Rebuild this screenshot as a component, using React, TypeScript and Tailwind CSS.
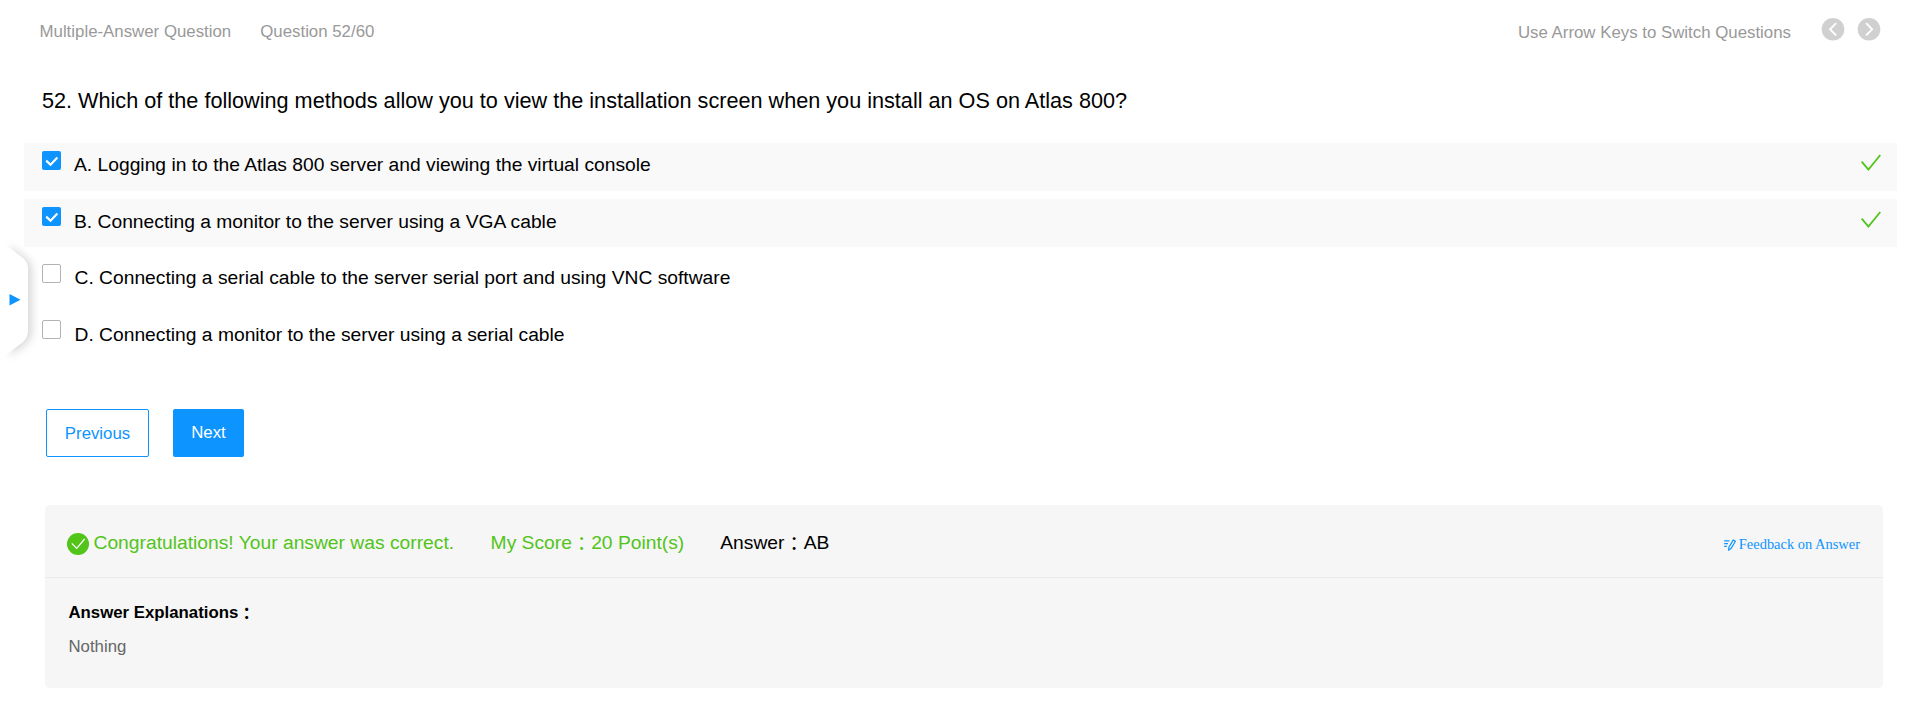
import React from "react";

type Option = {
  label: string;
  checked: boolean;
  box: string;
  text: string;
};

const options: Option[] = [
  {
    label: "A. Logging in to the Atlas 800 server and viewing the virtual console",
    checked: true,
    box: "h-[48px] bg-[#f9f9f9]",
    text: "ml-[13px] mt-[8px]",
  },
  {
    label: "B. Connecting a monitor to the server using a VGA cable",
    checked: true,
    box: "mt-2 h-[48px] bg-[#f9f9f9]",
    text: "ml-[13px] mt-[9px]",
  },
  {
    label: "C. Connecting a serial cable to the server serial port and using VNC software",
    checked: false,
    box: "mt-[9px] h-[48px]",
    text: "ml-[13.5px] mt-[8px]",
  },
  {
    label: "D. Connecting a monitor to the server using a serial cable",
    checked: false,
    box: "mt-2 h-[48px]",
    text: "ml-[13.5px] mt-[9px]",
  },
];

// Full-width colon, lowered so its dots sit on the Latin baseline.
function Colon() {
  return <span className="inline-block translate-y-[1.5px]">{"\uFF1A"}</span>;
}

function Checkbox({ checked }: { checked: boolean }) {
  return checked ? (
    <span className="mt-2 flex h-[19px] w-[19px] shrink-0 rounded-[2px] bg-[#0d94ff]">
      <svg viewBox="0 0 19 19" className="h-[19px] w-[19px]" fill="none" stroke="#fff" strokeWidth="2.2">
        <path d="M4.2 9.6 8.5 13.7 15.4 6.6" />
      </svg>
    </span>
  ) : (
    <span className="mt-2 h-[19px] w-[19px] shrink-0 rounded-[2px] border border-[#b3b3b3] bg-white" />
  );
}

function OptionRow({ option, index }: { option: Option; index: number }) {
  return (
    <div className={"flex items-start pl-[18px] pr-4 " + option.box}>
      <Checkbox checked={option.checked} />
      <span className={"text-[19.26px] leading-[28px] text-black " + option.text}>{option.label}</span>
      {option.checked && (
        <svg
          viewBox="0 0 20 18"
          className={"ml-auto h-[18px] w-5 " + (index === 0 ? "mt-[11px]" : "mt-3")}
          fill="none"
          stroke="#52c41a"
          strokeWidth="1.8"
        >
          <path d="M.7 7.6 7.4 15.6 19.3 1" />
        </svg>
      )}
    </div>
  );
}

function ArrowButton({ d }: { d: string }) {
  return (
    <svg viewBox="0 0 24 24" className="h-6 w-6" fill="none">
      <circle cx="12" cy="12.3" r="11.3" fill="#d0d0d0" />
      <path d={d} stroke="#fff" strokeWidth="1.9" strokeLinecap="round" />
    </svg>
  );
}

function DrawerHandle() {
  return (
    <svg viewBox="0 0 44 130" className="absolute left-0 top-[235px] h-[130px] w-11">
      <defs>
        <filter id="handle-shadow" x="-50%" y="-20%" width="200%" height="140%">
          <feGaussianBlur stdDeviation="4" />
        </filter>
      </defs>
      <path
        d="M6 10 23 23Q28 27 28 34V96Q28 102 23 107L6 120Z"
        fill="#000"
        fillOpacity="0.15"
        filter="url(#handle-shadow)"
        transform="translate(4 1)"
      />
      <path d="M0 5 6 10 23 23Q28 27 28 34V96Q28 102 23 107L6 120 0 125Z" fill="#fff" />
      <path d="M9.5 59 20.5 64.7 9.5 70.4Z" fill="#0d94ff" />
    </svg>
  );
}

export default function App() {
  return (
    <div className="relative h-[715px] w-full overflow-hidden bg-white font-['Liberation_Sans','Noto_Sans_CJK_KR',sans-serif]">
      <header className="flex h-[60px] items-start pl-[39.5px] pr-[38px] text-[16.84px] leading-[24px] text-[#999]">
        <span className="mt-[20px]">Multiple-Answer Question</span>
        <span className="ml-[29px] mt-[20px]">Question 52/60</span>
        <span className="ml-auto mt-[21px]">Use Arrow Keys to Switch Questions</span>
        <div className="ml-[30px] mt-[17px] flex gap-3">
          <ArrowButton d="M14.6 6.7 9.1 12.3 14.6 17.9" />
          <ArrowButton d="M9.6 6.7 15.1 12.3 9.6 17.9" />
        </div>
      </header>

      <main>
        <h1 className="ml-[42px] mt-[25px] h-[58px] text-[21.65px] leading-[32px] text-black">
          52. Which of the following methods allow you to view the installation screen when you install an OS on Atlas
          800?
        </h1>

        <section className="ml-6 mr-[22px]">
          {options.map((option, i) => (
            <OptionRow key={option.label} option={option} index={i} />
          ))}
        </section>

        <div className="ml-[46px] mt-[49px] flex gap-6 text-[16.8px]">
          <button className="h-12 w-[103px] rounded-[2px] border border-[#0d94ff] pt-px text-[#0d94ff]">
            Previous
          </button>
          <button className="h-12 w-[71px] rounded-[2px] bg-[#0d94ff] pb-px text-white">Next</button>
        </div>

        <section className="ml-[45px] mr-9 mt-12 h-[183px] rounded-[5px] bg-[#f6f6f6]">
          <div className="flex h-[73px] items-start border-b border-[#ebebeb] pl-[22px] pr-[23px] text-[19.26px] leading-[28px] text-[#52c41a]">
            <svg viewBox="0 0 22 22" className="mt-7 h-[22px] w-[22px]" fill="none">
              <circle cx="11" cy="11" r="11" fill="#52c41a" />
              <path d="M4.8 10.4 9.7 15.4 17.6 6" stroke="#fff" strokeWidth="1.3" />
            </svg>
            <span className="ml-[4.5px] mt-6">Congratulations! Your answer was correct.</span>
            <span className="ml-[36.5px] mt-6">
              My Score
              <Colon />
              20 Point(s)
            </span>
            <span className="ml-9 mt-6 text-black">
              Answer
              <Colon />
              AB
            </span>
            <a className="ml-auto mt-[29px] flex items-center gap-[2.5px] font-['Liberation_Serif',serif] text-[14.46px] leading-[20px] text-[#0d94ff]">
              <svg viewBox="0 0 12 12" className="mt-px h-3 w-3" fill="none" stroke="#0d94ff" strokeWidth="1.2">
                <path d="M.2 1.8H5.4M.2 4.6H4M.2 7.4H2.8" />
                <path d="M9.3.9 11.4 2.3 7 9.6 4.6 11.2 4.9 8.2Z" strokeLinejoin="round" />
              </svg>
              Feedback on Answer
            </a>
          </div>
          <div className="pl-[23.5px] text-[16.8px] leading-[24px]">
            <h2 className="h-[34px] pt-[23px] font-bold text-black">
              Answer Explanations
              <Colon />
            </h2>
            <p className="pt-[23px] text-[#666]">Nothing</p>
          </div>
        </section>
      </main>

      <DrawerHandle />
    </div>
  );
}
